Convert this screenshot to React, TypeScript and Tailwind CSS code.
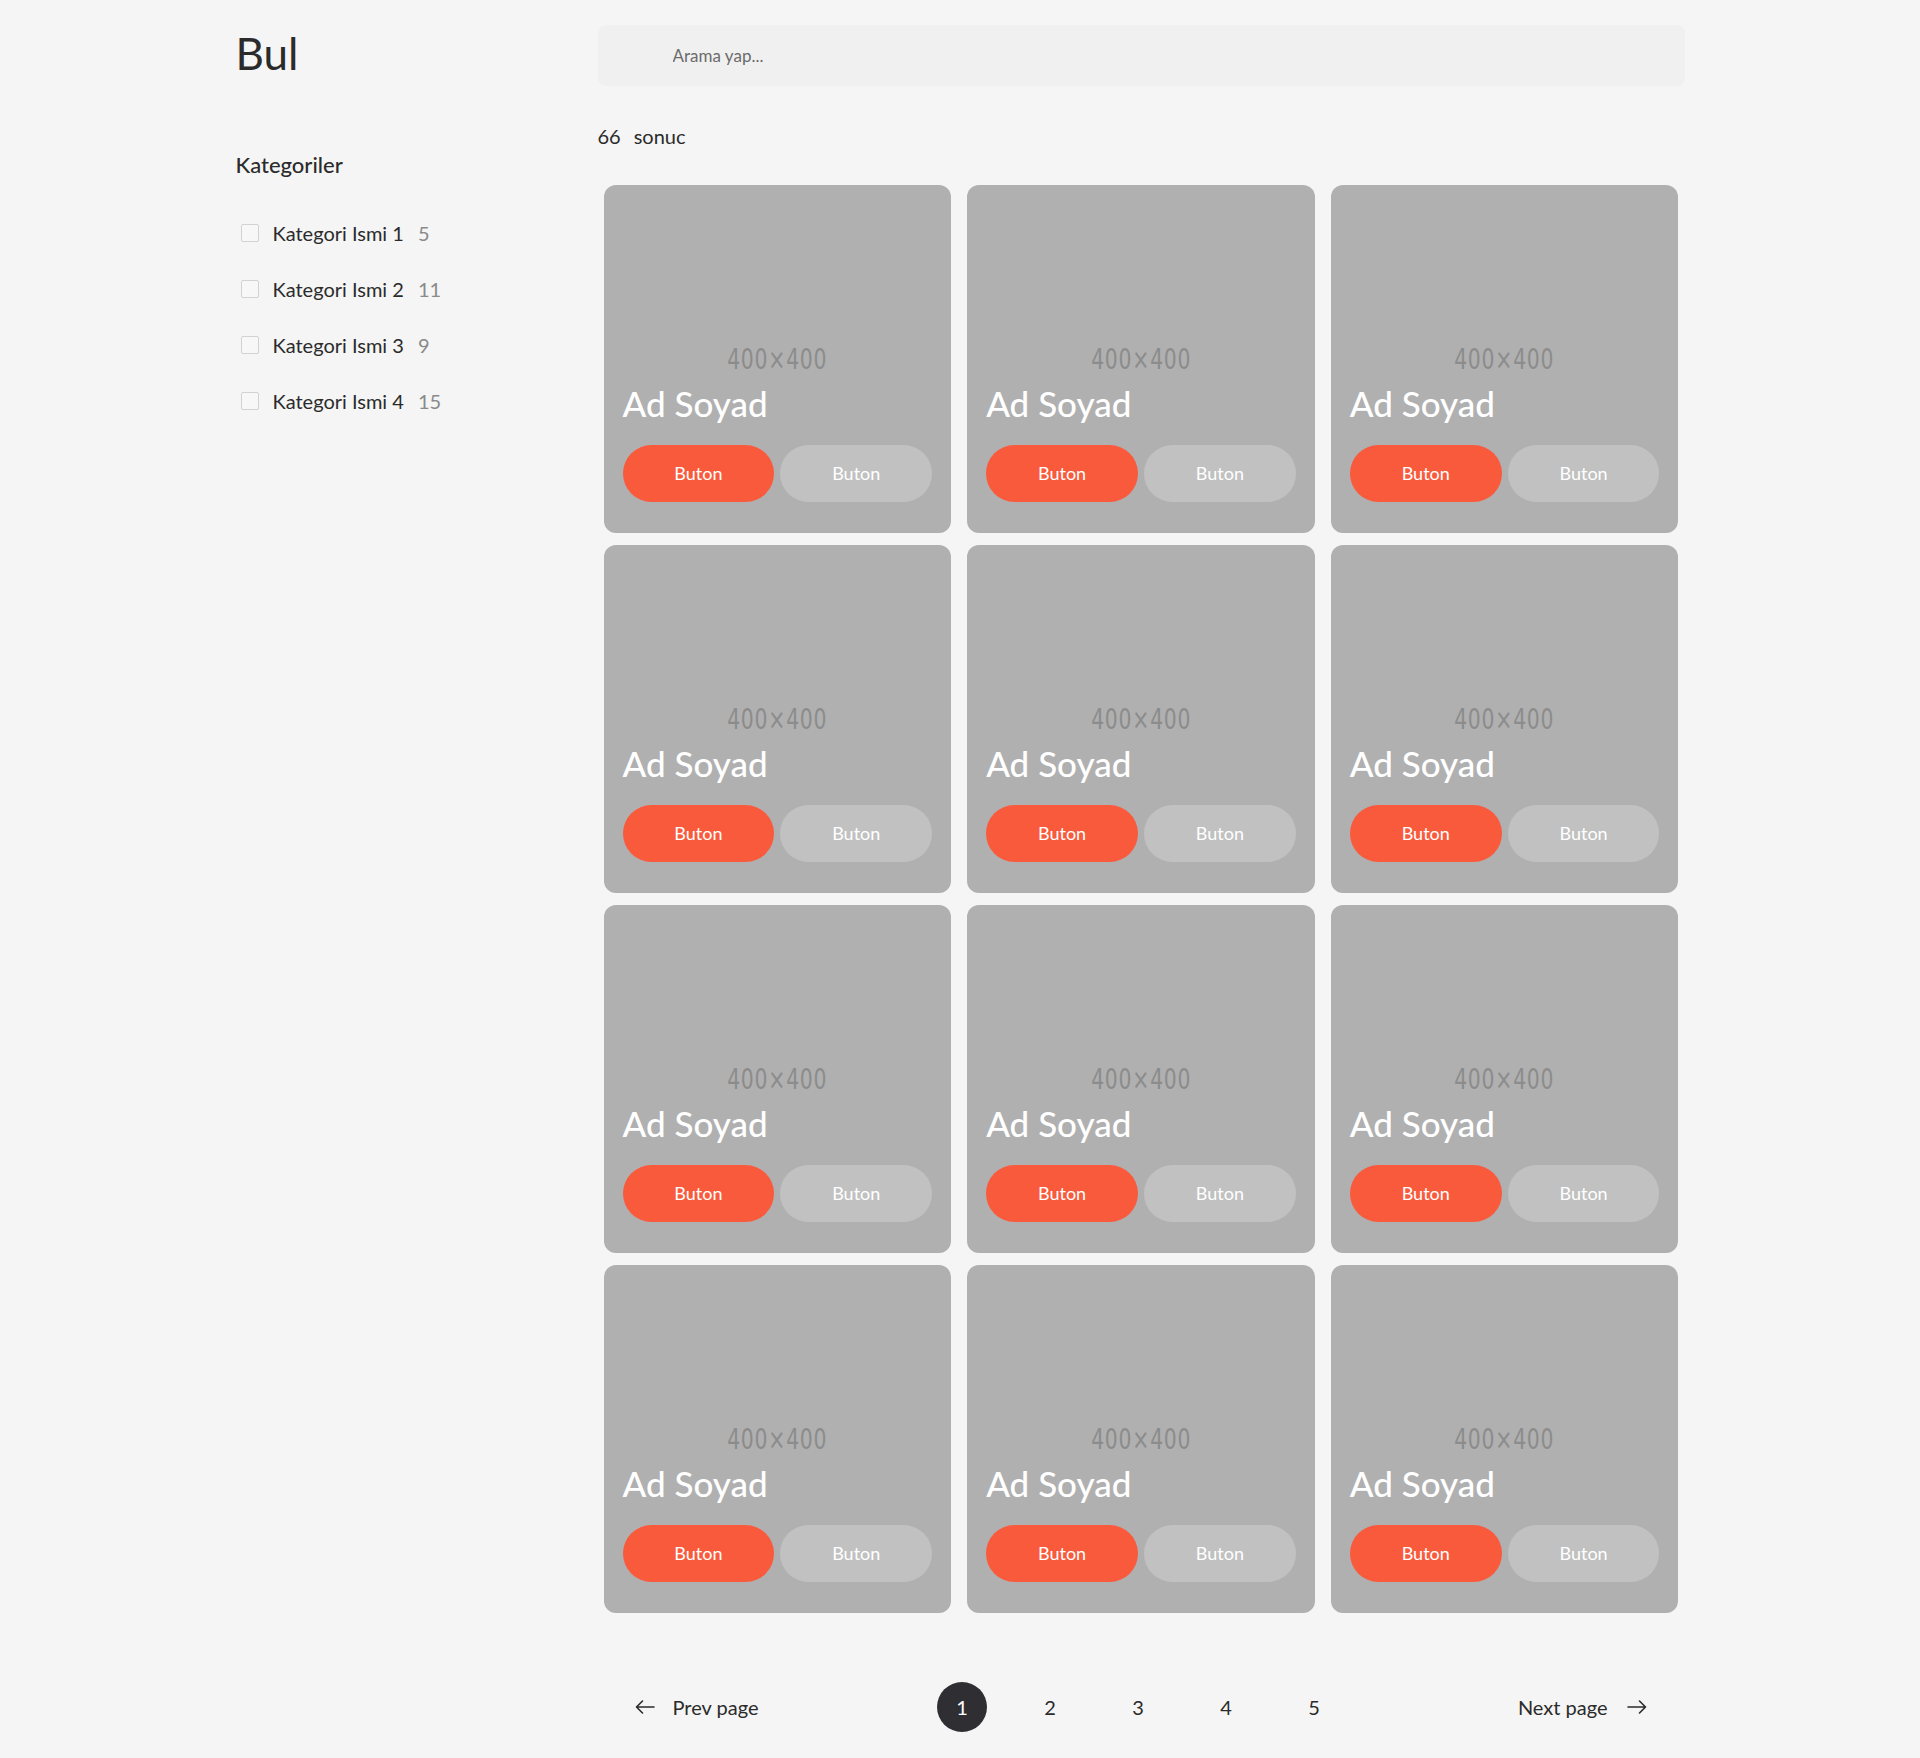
import React from 'react'

const categories = [
  { name: 'Kategori Ismi 1', count: 5 },
  { name: 'Kategori Ismi 2', count: 11 },
  { name: 'Kategori Ismi 3', count: 9 },
  { name: 'Kategori Ismi 4', count: 15 },
]

const people = Array.from({ length: 12 }, (_, i) => ({ id: i, name: 'Ad Soyad' }))

function ArrowLeft() {
  return (
    <svg className="w-[20px] h-[14px]" viewBox="0 0 20 14" fill="none" stroke="#2b2b2b" strokeWidth={1.6} strokeLinecap="round" strokeLinejoin="round">
      <path d="M19 7H1.5M7.5 1L1.5 7l6 6" />
    </svg>
  )
}

function ArrowRight() {
  return (
    <svg className="w-[20px] h-[14px]" viewBox="0 0 20 14" fill="none" stroke="#2b2b2b" strokeWidth={1.6} strokeLinecap="round" strokeLinejoin="round">
      <path d="M1 7h17.5M12.5 1l6 6-6 6" />
    </svg>
  )
}

function PersonCard({ name }: { name: string }) {
  return (
    <div className="relative h-[348px] rounded-xl bg-[#b0b0b0] overflow-hidden flex flex-col justify-end px-[19px] pb-[31px]">
      <div className="absolute inset-0 flex items-center justify-center">
        <span className="font-['DejaVu_Sans_Condensed','Liberation_Sans_Narrow',sans-serif] text-[29px] leading-none text-[#8c8c8c] scale-x-[0.78] tracking-[1px]">
          400×400
        </span>
      </div>
      <h3 className="relative text-[35px] leading-none font-medium text-white mb-[24px]">{name}</h3>
      <div className="relative flex gap-[6px]">
        <button className="flex-1 h-[57px] rounded-full bg-[#fa5a3c] text-white text-[18px]">Buton</button>
        <button className="flex-1 h-[57px] rounded-full bg-[#c1c1c1] text-white text-[18px]">Buton</button>
      </div>
    </div>
  )
}

export default function App() {
  return (
    <div className="min-h-screen bg-[#f5f5f5] font-['Lato','Noto_Sans',sans-serif] text-[#2b2b2b]">
      <div className="w-[1449px] mx-auto flex pt-[25px] pb-[25px]">
        <aside className="w-[362px] shrink-0">
          <h1 className="text-[44px] leading-none mt-[6px]">Bul</h1>
          <h2 className="text-[22px] leading-none font-medium mt-[79px]">Kategoriler</h2>
          <ul className="mt-[29px]">
            {categories.map((c) => (
              <li key={c.name} className="h-[56px] flex items-center">
                <span className="ml-[5px] w-[18px] h-[18px] rounded-[2px] border border-[#d2d2d2] bg-[#f7f7f7]" />
                <span className="ml-[14px] text-[20px]">{c.name}</span>
                <span className="ml-[14px] text-[20px] text-[#8a8a8a]">{c.count}</span>
              </li>
            ))}
          </ul>
        </aside>

        <main className="flex-1">
          <div className="h-[61px] rounded-lg bg-[#f0f0f0] flex items-center pl-[75px]">
            <input
              type="text"
              placeholder="Arama yap..."
              className="w-full bg-transparent outline-none text-[17px] text-[#333] placeholder:text-[#6b6b6b]"
            />
          </div>

          <p className="mt-[40px] text-[20px] leading-none flex gap-[13px]">
            <span>66</span>
            <span>sonuc</span>
          </p>

          <div className="mt-[39px] px-[6px] grid grid-cols-3 gap-x-[16px] gap-y-[12px]">
            {people.map((p) => (
              <PersonCard key={p.id} name={p.name} />
            ))}
          </div>

          <nav className="mt-[69px] px-[37px] flex items-center justify-between text-[20px]">
            <button className="flex items-center gap-[18px]">
              <ArrowLeft />
              <span>Prev page</span>
            </button>
            <div className="flex items-center gap-[38px]">
              {[1, 2, 3, 4, 5].map((n) => (
                <button
                  key={n}
                  className={`w-[50px] h-[50px] rounded-full flex items-center justify-center ${n === 1 ? 'bg-[#2e2e33] text-white' : ''}`}
                >
                  {n}
                </button>
              ))}
            </div>
            <button className="flex items-center gap-[20px]">
              <span>Next page</span>
              <ArrowRight />
            </button>
          </nav>
        </main>
      </div>
    </div>
  )
}
